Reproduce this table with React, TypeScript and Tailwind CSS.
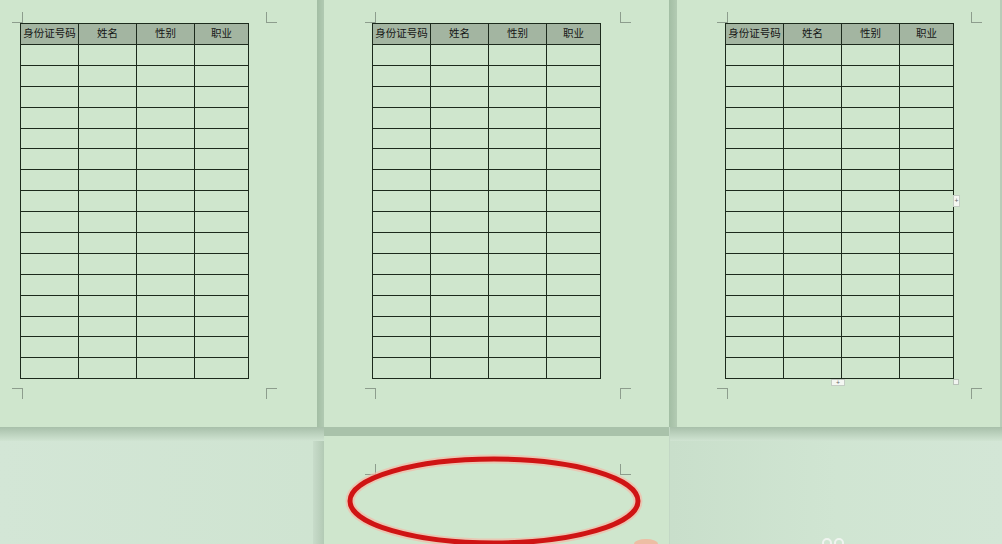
import React from "react";

const headers = ["身份证号码", "姓名", "性别", "职业"];
const rows = Array.from({ length: 16 }, (_, i) => i);

function Corners({ l, r, top, bottom }: { l: number; r: number; top: number; bottom?: number }) {
  const c = "absolute w-[11px] h-[11px] border-[#8d9d8d]";
  return (
    <>
      <div className={`${c} border-r border-b`} style={{ left: l - 10, top: top - 10 }} />
      <div className={`${c} border-l border-b`} style={{ left: r, top: top - 10 }} />
      {bottom !== undefined && (
        <>
          <div className={`${c} border-r border-t`} style={{ left: l - 10, top: bottom }} />
          <div className={`${c} border-l border-t`} style={{ left: r, top: bottom }} />
        </>
      )}
    </>
  );
}

function Sheet() {
  return (
    <table className="border-collapse table-fixed w-[228px] font-['Noto_Sans_CJK_SC','Noto_Sans',sans-serif]">
      <colgroup>
        <col className="w-[58px]" />
        <col className="w-[58px]" />
        <col className="w-[58px]" />
        <col className="w-[54px]" />
      </colgroup>
      <thead>
        <tr className="h-[21px]">
          {headers.map((h) => (
            <th
              key={h}
              className="border border-[#1c2a1c] bg-[#a3b5a1] p-0 pb-[3px] text-[10.5px] leading-[16px] font-normal text-[#151515] whitespace-nowrap overflow-hidden"
            >
              {h}
            </th>
          ))}
        </tr>
      </thead>
      <tbody>
        {rows.map((r) => (
          <tr key={r} className="h-[20.9px]">
            {headers.map((h) => (
              <td key={h} className="border border-[#1c2a1c] p-0" />
            ))}
          </tr>
        ))}
      </tbody>
    </table>
  );
}

export default function App() {
  return (
    <div className="w-[1002px] h-[544px] overflow-hidden flex flex-col bg-[#d1e5d3]">
      <div className="flex h-[427px] shrink-0">
        <div className="relative w-[317px] bg-[#cfe6cd] pl-[20px] pt-[23px]">
          <Corners l={22} r={266} top={22} bottom={388} />
          <Sheet />
        </div>
        <div className="w-[7px] bg-gradient-to-r from-[#a3bea4] to-[#b1cab2]" />
        <div className="relative w-[345px] bg-[#cfe6cd] pl-[48px] pt-[23px]">
          <Corners l={51} r={296} top={22} bottom={388} />
          <Sheet />
        </div>
        <div className="w-[8px] bg-gradient-to-r from-[#a3bea4] to-[#b3cbb3]" />
        <div className="relative w-[323px] bg-[#cfe6cd] pl-[48px] pt-[23px]">
          <Corners l={50} r={294} top={22} bottom={388} />
          <Sheet />
          <div className="absolute left-[276px] top-[195px] w-[7px] h-[12px] bg-[#f4f7f2] border border-[#c4cdc4] text-[7px] leading-[10px] text-center text-[#666]">+</div>
          <div className="absolute left-[154px] top-[379px] w-[14px] h-[7px] bg-[#f4f7f2] border border-[#c4cdc4] text-[7px] leading-[5px] text-center text-[#666]">+</div>
          <div className="absolute left-[276px] top-[379px] w-[6px] h-[6px] bg-[#f1f4f0] border border-[#b8c2b8]" />
        </div>
        <div className="flex-1 bg-[#b7ccb8]" />
      </div>
      <div className="flex flex-1">
        <div className="w-[324px] flex flex-col">
          <div className="h-[14px] bg-gradient-to-b from-[#a8c0aa] to-[#d0e4d2]" />
          <div className="flex-1 flex">
            <div className="flex-1 bg-gradient-to-r from-[#d3e6d6] to-[#cfe4d1]" />
            <div className="w-[11px] bg-gradient-to-r from-[#c8dcca] to-[#b3cab5]" />
          </div>
        </div>
        <div className="w-[345px] flex flex-col">
          <div className="h-[9px] bg-[#a9c2aa]" />
          <div className="relative flex-1 bg-[#cfe6cd]">
            <div className="absolute w-[11px] h-[11px] border-r border-b border-[#8d9d8d] left-[41px] top-[28px]" />
            <div className="absolute w-[11px] h-[11px] border-l border-b border-[#8d9d8d] left-[296px] top-[28px]" />
            <svg className="absolute left-0 top-0" width="345" height="108" viewBox="0 0 345 108">
              <ellipse cx="170" cy="65" rx="144" ry="42" fill="none" stroke="#f3b9a8" strokeWidth="9" opacity="0.7" />
              <ellipse cx="170" cy="65" rx="144" ry="42" fill="none" stroke="#cf1414" strokeWidth="5" />
              <ellipse cx="322" cy="108" rx="12" ry="5" fill="#f4b49a" opacity="0.8" />
            </svg>
          </div>
        </div>
        <div className="flex-1 flex flex-col border-l border-[#c3d8c5]">
          <div className="h-[14px] bg-gradient-to-b from-[#a8c0aa] to-[#d0e4d2]" />
          <div className="relative flex-1 bg-gradient-to-r from-[#c9dfcb] via-[#d0e5d2] to-[#d3e6d6]">
            <div className="absolute left-[152px] top-[97px] flex gap-[2px]">
              <div className="w-[10px] h-[10px] rounded-full border-2 border-[#f0f4f0]" />
              <div className="w-[10px] h-[10px] rounded-full border-2 border-[#f0f4f0]" />
            </div>
          </div>
        </div>
      </div>
    </div>
  );
}
